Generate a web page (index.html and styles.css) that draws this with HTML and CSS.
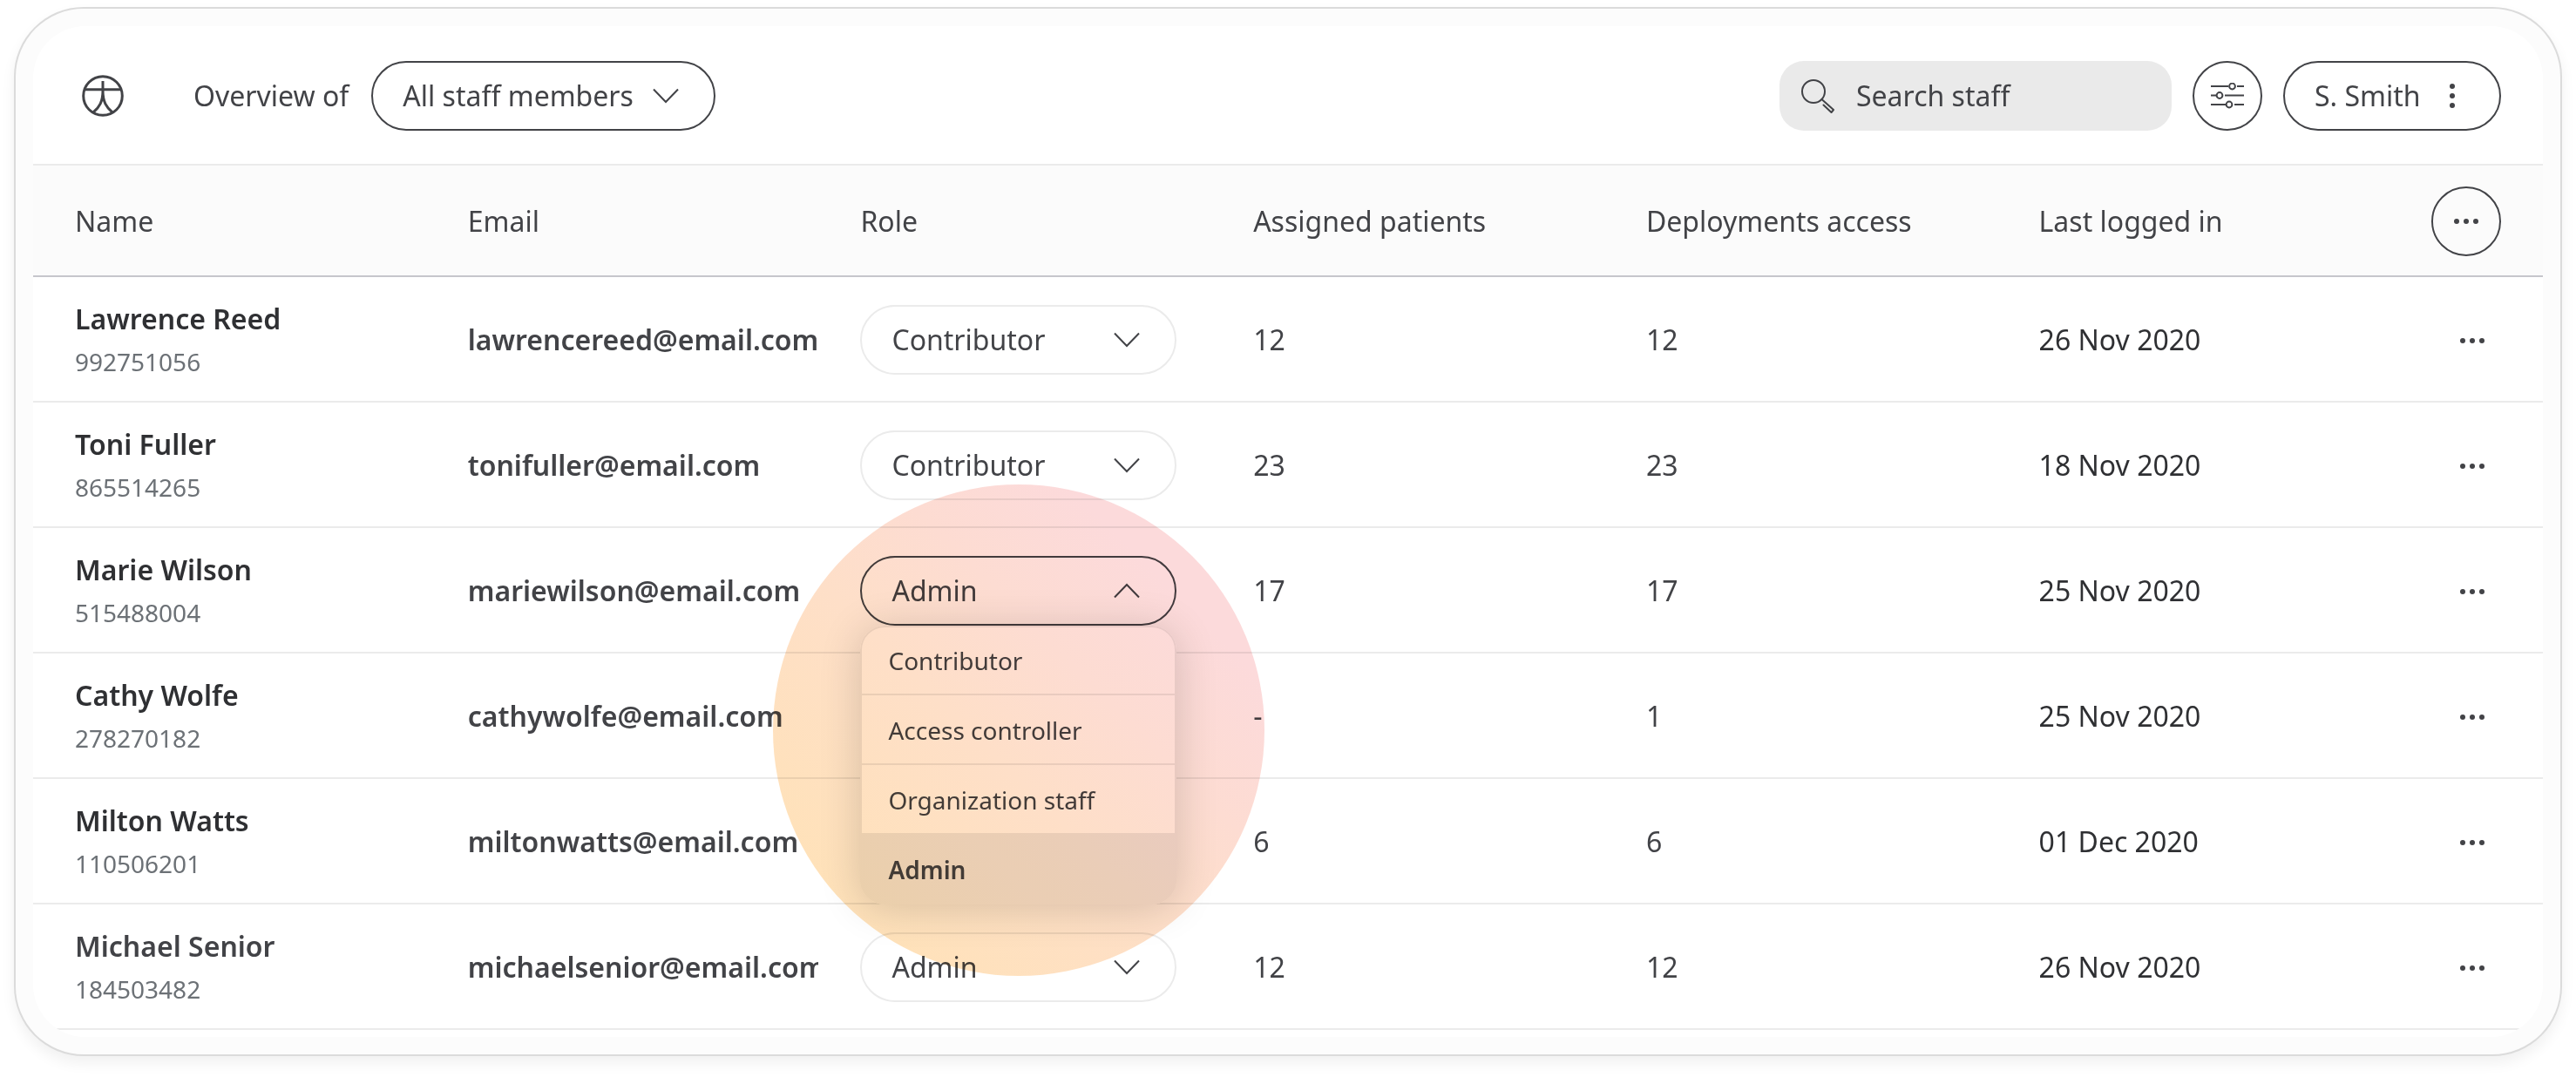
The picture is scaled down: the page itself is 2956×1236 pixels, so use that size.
FILE: index.html
```html
<!DOCTYPE html>
<html lang="en">
<head>
<meta charset="utf-8">
<meta name="viewport" content="width=device-width, initial-scale=1">
<title>Staff overview</title>
<link rel="stylesheet" href="styles.css">
</head>
<body>
<svg class="sprite" aria-hidden="true">
  <symbol id="chevron" viewBox="0 0 30 18"><path d="M1 1.500 15 16 29 1.500"/></symbol>
  <symbol id="dots" viewBox="0 0 30 8"><circle cx="4" cy="4" r="3"/><circle cx="15" cy="4" r="3"/><circle cx="26" cy="4" r="3"/></symbol>
</svg>
<main class="frame">
  <div class="app">
    <header class="topbar">
      <svg class="logo" viewBox="0 0 48 48" aria-hidden="true">
        <circle cx="24" cy="24" r="22.300"/>
        <path d="M3 16.700H45M24 7V25M24 18C24 31 20 37 13 43M24 18C24 31 28 37 35 43"/>
      </svg>
      <label class="overview" for="scope">Overview of</label>
      <div class="select scope">
        <select id="scope"><option>All staff members</option></select>
        <svg class="chevron" aria-hidden="true"><use href="#chevron"/></svg>
      </div>
      <div class="tools">
        <div class="search">
          <svg class="search-icon" viewBox="0 0 40 40" aria-hidden="true">
            <circle cx="15" cy="15" r="13"/>
            <path d="M24.500 24 38 36 35.500 39 26.500 30.500"/>
          </svg>
          <input type="search" placeholder="Search staff" aria-label="Search staff">
        </div>
        <button class="round" type="button" aria-label="Filters">
          <svg class="filter-icon" viewBox="0 0 40 30" aria-hidden="true">
            <path d="M1 4H21M31 4H39M1 14.500H7M17 14.500H39M1 25H18M28 25H39"/>
            <circle cx="25.500" cy="4" r="3.400"/><circle cx="11" cy="14.500" r="3.400"/><circle cx="22" cy="25" r="3.400"/>
          </svg>
        </button>
        <button class="user" type="button">S. Smith
          <svg class="kebab" viewBox="0 0 8 30" aria-hidden="true"><circle cx="4" cy="4" r="3"/><circle cx="4" cy="15" r="3"/><circle cx="4" cy="26" r="3"/></svg>
        </button>
      </div>
    </header>
    <table class="staff">
      <colgroup><col class="col"><col class="col"><col class="col"><col class="col"><col class="col"><col class="col"><col></colgroup>
      <thead>
        <tr>
          <th>Name</th><th>Email</th><th>Role</th><th>Assigned patients</th><th>Deployments access</th><th>Last logged in</th>
          <th class="actions"><button class="round" type="button" aria-label="Table options"><svg class="dots" aria-hidden="true"><use href="#dots"/></svg></button></th>
        </tr>
      </thead>
      <tbody>
        <tr>
          <td><div class="name">Lawrence Reed</div><div class="id">992751056</div></td>
          <td class="email">lawrencereed@email.com</td>
          <td><div class="select role"><select aria-label="Role of Lawrence Reed"><option>Contributor</option></select><svg class="chevron" aria-hidden="true"><use href="#chevron"/></svg></div></td>
          <td>12</td><td>12</td><td class="date">26 Nov 2020</td>
          <td class="actions"><button class="more" type="button" aria-label="More"><svg class="dots" aria-hidden="true"><use href="#dots"/></svg></button></td>
        </tr>
        <tr>
          <td><div class="name">Toni Fuller</div><div class="id">865514265</div></td>
          <td class="email">tonifuller@email.com</td>
          <td><div class="select role"><select aria-label="Role of Toni Fuller"><option>Contributor</option></select><svg class="chevron" aria-hidden="true"><use href="#chevron"/></svg></div></td>
          <td>23</td><td>23</td><td class="date">18 Nov 2020</td>
          <td class="actions"><button class="more" type="button" aria-label="More"><svg class="dots" aria-hidden="true"><use href="#dots"/></svg></button></td>
        </tr>
        <tr>
          <td><div class="name">Marie Wilson</div><div class="id">515488004</div></td>
          <td class="email">mariewilson@email.com</td>
          <td>
            <div class="select role open">
              <select aria-label="Role of Marie Wilson"><option>Admin</option></select>
              <svg class="chevron" aria-hidden="true"><use href="#chevron"/></svg>
              <ul class="menu" role="listbox" aria-label="Roles">
                <li role="option">Contributor</li>
                <li role="option">Access controller</li>
                <li role="option">Organization staff</li>
                <li role="option" class="selected" aria-selected="true">Admin</li>
              </ul>
              <div class="spotlight"></div>
            </div>
          </td>
          <td>17</td><td>17</td><td class="date">25 Nov 2020</td>
          <td class="actions"><button class="more" type="button" aria-label="More"><svg class="dots" aria-hidden="true"><use href="#dots"/></svg></button></td>
        </tr>
        <tr>
          <td><div class="name">Cathy Wolfe</div><div class="id">278270182</div></td>
          <td class="email">cathywolfe@email.com</td>
          <td></td>
          <td>-</td><td>1</td><td class="date">25 Nov 2020</td>
          <td class="actions"><button class="more" type="button" aria-label="More"><svg class="dots" aria-hidden="true"><use href="#dots"/></svg></button></td>
        </tr>
        <tr>
          <td><div class="name">Milton Watts</div><div class="id">110506201</div></td>
          <td class="email">miltonwatts@email.com</td>
          <td></td>
          <td>6</td><td>6</td><td class="date">01 Dec 2020</td>
          <td class="actions"><button class="more" type="button" aria-label="More"><svg class="dots" aria-hidden="true"><use href="#dots"/></svg></button></td>
        </tr>
        <tr>
          <td><div class="name">Michael Senior</div><div class="id">184503482</div></td>
          <td class="email">michaelsenior@email.com</td>
          <td><div class="select role"><select aria-label="Role of Michael Senior"><option>Admin</option></select><svg class="chevron" aria-hidden="true"><use href="#chevron"/></svg></div></td>
          <td>12</td><td>12</td><td class="date">26 Nov 2020</td>
          <td class="actions"><button class="more" type="button" aria-label="More"><svg class="dots" aria-hidden="true"><use href="#dots"/></svg></button></td>
        </tr>
      </tbody>
    </table>
  </div>
</main>
</body>
</html>
```

FILE: styles.css
```css
:root {
  --ink: #424347;
  --ink-dark: #2f3033;
  --muted: #6c7176;
  --line: #ebebeb;
}

* { box-sizing: border-box; }

body {
  margin: 0;
  background: #fff;
  color: var(--ink);
  font-family: "Noto Sans", "Open Sans", sans-serif;
  font-size: 32px;
  line-height: 44px;
}

.sprite { position: absolute; width: 0; height: 0; }

.frame {
  margin: 8px 16px 24px;
  padding: 20px;
  border: 2px solid rgba(0, 0, 0, 0.13);
  border-radius: 80px;
  background: #fcfcfc;
  box-shadow: 0 8px 16px rgba(0, 0, 0, 0.06);
}

.app {
  padding-bottom: 8px;
  border-radius: 60px;
  background: #fff;
  overflow: hidden;
}

.topbar {
  display: flex;
  align-items: center;
  padding: 40px 48px 38px 56px;
  border-bottom: 2px solid var(--line);
}

.logo {
  width: 48px;
  height: 48px;
  margin-right: 80px;
  fill: none;
  stroke: var(--ink);
  stroke-width: 3;
}

.overview { margin-right: 26px; }

select,
input,
button {
  margin: 0;
  font: inherit;
  color: inherit;
}

.select {
  position: relative;
  display: flex;
  align-items: center;
}

select {
  appearance: none;
  height: 80px;
  padding: 0 92px 0 34px;
  border: 2px solid var(--ink);
  border-radius: 40px;
  background: transparent;
}

.role { width: 90%; }

.role select {
  width: 100%;
  border-color: var(--line);
}

.role.open select { border-color: var(--ink); }

/* The arrow lies over the right end of its select. */
.chevron {
  position: absolute;
  right: 42px;
  width: 30px;
  height: 18px;
  fill: none;
  stroke: var(--ink);
  stroke-width: 2;
  pointer-events: none;
}

.open .chevron { transform: rotate(180deg); }

.tools {
  display: flex;
  gap: 24px;
  margin-left: auto;
}

.search {
  display: flex;
  align-items: center;
  gap: 24px;
  width: 450px;
  height: 80px;
  padding: 0 24px;
  border-radius: 28px;
  background: #eaeaea;
}

.search-icon {
  flex: none;
  width: 40px;
  height: 40px;
  fill: none;
  stroke: var(--ink);
  stroke-width: 2;
  stroke-linejoin: round;
  stroke-linecap: round;
}

.search input {
  appearance: none;
  width: 100%;
  min-width: 0;
  padding: 0;
  border: 0;
  background: none;
}

.search input::placeholder { color: var(--ink); opacity: 1; }

.round {
  display: inline-flex;
  align-items: center;
  justify-content: center;
  width: 80px;
  height: 80px;
  padding: 0;
  border: 2px solid var(--ink);
  border-radius: 50%;
  background: none;
  vertical-align: middle;
}

.filter-icon {
  width: 40px;
  height: 30px;
  fill: none;
  stroke: var(--ink);
  stroke-width: 2;
}

.user {
  display: flex;
  align-items: center;
  justify-content: space-between;
  width: 250px;
  height: 80px;
  padding: 0 50px 0 34px;
  border: 2px solid var(--ink);
  border-radius: 40px;
  background: none;
}

.kebab { width: 8px; height: 30px; fill: var(--ink); }

.dots { width: 30px; height: 8px; fill: var(--ink); }

.staff {
  width: 100%;
  table-layout: fixed;
  border-collapse: separate;
  border-spacing: 0;
}

.col { width: 15.650%; }

th,
td {
  padding: 2px 0 0 48px;
  text-align: left;
  font-weight: 400;
  vertical-align: middle;
}

th {
  height: 128px;
  border-bottom: 2px solid #c6c6cc;
  background: #fbfbfb;
}

td {
  height: 144px;
  border-bottom: 2px solid var(--line);
}

.name {
  color: var(--ink-dark);
  font-weight: 600;
  line-height: 50px;
}

tr:last-child .name { color: var(--ink); }

.id {
  color: var(--muted);
  font-size: 28px;
  line-height: 48px;
}

.email {
  overflow: hidden;
  font-weight: 600;
  white-space: nowrap;
}

.date { color: var(--ink-dark); }

.actions {
  padding: 2px 48px 0 0;
  text-align: right;
}

.more {
  display: inline-flex;
  align-items: center;
  height: 48px;
  padding: 0 18px;
  border: 0;
  background: none;
  vertical-align: middle;
}

.menu {
  position: absolute;
  z-index: 1;
  top: 100%;
  left: 0;
  width: 100%;
  margin: 0;
  padding: 0;
  border-radius: 28px;
  background: #fff;
  box-shadow: 0 4px 48px rgba(0, 0, 0, 0.16);
  list-style: none;
  overflow: hidden;
  font-size: 28px;
}

.menu li {
  display: flex;
  align-items: center;
  height: 80px;
  padding: 2px 32px 0 30px;
  border: 2px solid var(--line);
  border-top-width: 0;
}

.menu li:first-child {
  padding-top: 0;
  border-top-width: 2px;
  border-radius: 28px 28px 0 0;
}

.menu .selected {
  background: var(--line);
  font-weight: 600;
}

/* Tinted circle that draws attention to the open role menu. */
.spotlight {
  position: absolute;
  z-index: 2;
  top: -82px;
  left: 50%;
  width: 564px;
  height: 564px;
  border-radius: 50%;
  background: linear-gradient(45deg, #ffe2b8 12%, #fedfc8 45%, #fddcd2 62%, #fcdadb 80%);
  mix-blend-mode: multiply;
  transform: translateX(-50%);
  pointer-events: none;
}
```
